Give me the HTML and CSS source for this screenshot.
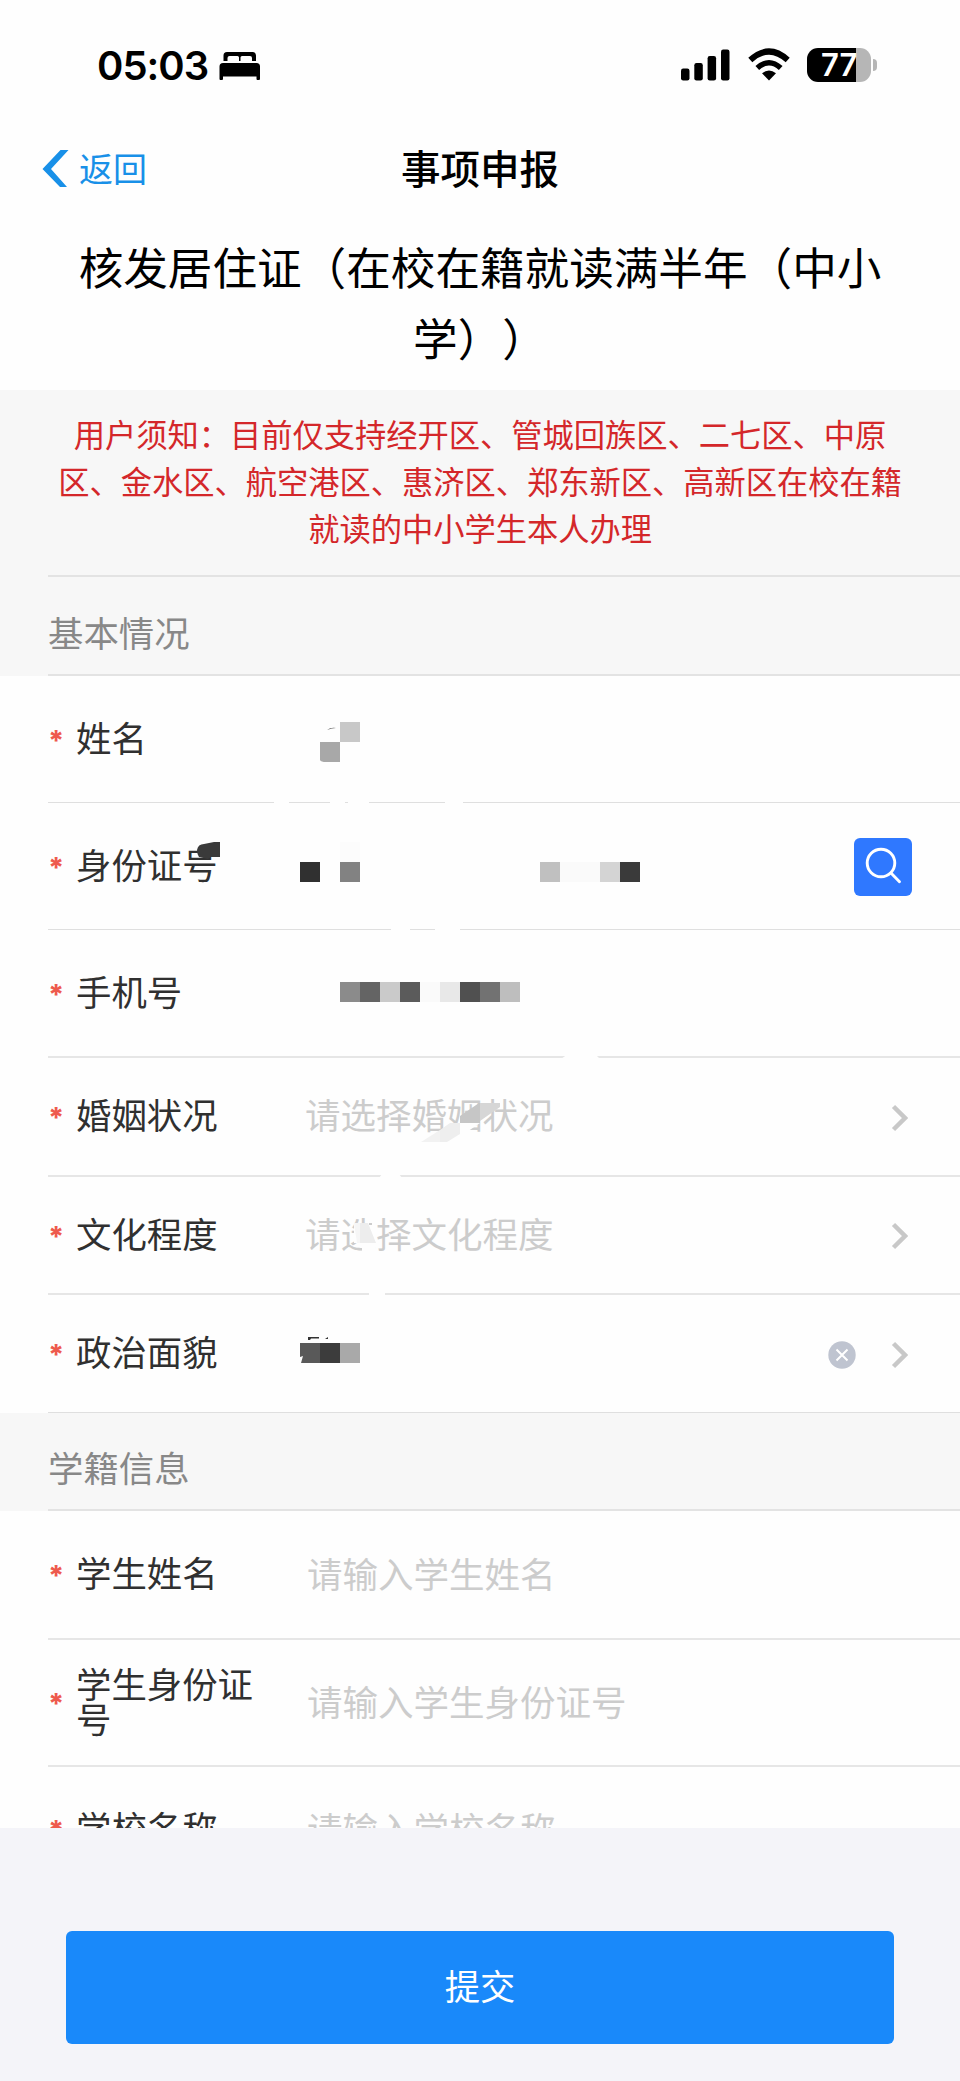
FILE: index.html
```html
<!DOCTYPE html>
<html lang="zh-CN">
<head>
<meta charset="utf-8">
<title>事项申报</title>
<link rel="stylesheet" href="styles.css">
</head>
<body>
<div class="screen">
  <header class="status">
    <div class="status-left">
      <span class="time">05:03</span>
      <svg class="bed" width="42" height="30" viewBox="0 0 42 30"><path d="M4.500 10V4.500Q4.500 1 8 1H33.500Q37 1 37 4.500V10H33V7Q33 5 31 5H23Q21.500 5 21.500 6.500V10H20V6.500Q20 5 18.500 5H10.500Q8.500 5 8.500 7V10Z"/><path d="M.500 28V15.500Q.500 12 4 12H37.500Q41 12 41 15.500V28Q41 29 40 29H38.500Q37.500 29 37.500 28V25.500H4V28Q4 29 3 29H1.500Q.500 29 .500 28Z"/></svg>
    </div>
    <div class="status-right">
      <svg width="49" height="32" viewBox="0 0 49 32"><rect x="0" y="19.500" width="8.500" height="12" rx="2.200"/><rect x="13.300" y="14" width="8.500" height="17.500" rx="2.200"/><rect x="26.600" y="7" width="8.500" height="24.500" rx="2.200"/><rect x="40" y="0.500" width="8.500" height="31" rx="2.200"/></svg>
      <svg class="wifi" width="44" height="33" viewBox="0 0 44 33"><path d="M3.300 12Q22-5 40.700 12" fill="none" stroke="#000" stroke-width="6"/><path d="M10.300 20Q22 9.500 33.700 20" fill="none" stroke="#000" stroke-width="5.500"/><path d="M15 25.300Q22 19.500 29 25.300L22 32.500Z"/></svg>
      <div class="battery"><span class="battery-body">77</span><span class="battery-tip"></span></div>
    </div>
  </header>
  <nav class="nav">
    <a class="back"><svg width="28" height="40" viewBox="0 0 28 40"><path d="M.500 20 18.500 1H26.500L9 20 25 38H18Z" fill="#1890e8"/></svg><span>返回</span></a>
    <h1 class="nav-title">事项申报</h1>
    <span class="nav-side"></span>
  </nav>
  <h2 class="heading">核发居住证（在校在籍就读满半年（中小<br>学））</h2>
  <main class="form">
    <div class="notice"><p>用户须知：目前仅支持经开区、管城回族区、二七区、中原<br>区、金水区、航空港区、惠济区、郑东新区、高新区在校在籍<br>就读的中小学生本人办理</p></div>
    <h3 class="section">基本情况</h3>
    <div class="row thin r-name"><i class="req">*</i><label>姓名</label></div>
    <div class="row thin r-id"><i class="req">*</i><label>身份证号</label><span class="value"></span>
      <button class="search"><svg width="58" height="58" viewBox="0 0 58 58" fill="none" stroke="#fff" stroke-width="2.900" stroke-linecap="round"><circle cx="27" cy="25" r="13.800"/><path d="m37 35 8.500 8.800"/></svg></button></div>
    <div class="row r-phone"><i class="req">*</i><label>手机号</label></div>
    <div class="row r-marriage"><i class="req">*</i><label>婚姻状况</label><span class="value">请选择婚姻状况</span><svg class="arrow" width="17" height="30" viewBox="0 0 17 30"><path d="m2.500 3.500 11.500 11.500-11.500 11.500"/></svg></div>
    <div class="row r-pick"><i class="req">*</i><label>文化程度</label><span class="value">请选择文化程度</span><svg class="arrow" width="17" height="30" viewBox="0 0 17 30"><path d="m2.500 3.500 11.500 11.500-11.500 11.500"/></svg></div>
    <div class="row thin r-pick"><i class="req">*</i><label>政治面貌</label><span class="value"></span><svg class="clear" width="28" height="28" viewBox="0 0 28 28"><circle cx="14" cy="14" r="13.700" fill="#bfc4d0"/><path d="m8.500 8.500 11 11m0-11-11 11" stroke="#fff" stroke-width="2"/></svg><svg class="arrow" width="17" height="30" viewBox="0 0 17 30"><path d="m2.500 3.500 11.500 11.500-11.500 11.500"/></svg></div>
    <h3 class="section second">学籍信息</h3>
    <div class="row input r-student"><i class="req">*</i><label>学生姓名</label><span class="value">请输入学生姓名</span></div>
    <div class="row input r-sid"><i class="req">*</i><label>学生身份证号</label><span class="value">请输入学生身份证号</span></div>
    <div class="row input r-school"><i class="req">*</i><label>学校名称</label><span class="value">请输入学校名称</span></div>
  </main>
  <footer class="footer"><button class="submit">提交</button></footer>
  <svg class="redaction" width="960" height="2081" viewBox="0 0 960 2081">
    <g fill="#fefefe"><path d="M274 800h15v5h-15zM330 800h15v5h-15zM348 800h21v5h-21zM445 800h18v5h-18zM391 927h19v5h-19zM435 927h25v5h-25zM561 1059l7-5h27l5 5zM379 1178l3-4h17l3 4zM369 1292h16v5h-16z"/></g>
    <path d="M327 730q4-3 9-2-4 0-9 2z" fill="#555"/>
    <path d="M340 722h20v20h-20z" fill="#c8c8c8"/><path d="M320 742h20v20h-14q-5 0-6-2z" fill="#a8a8a8"/>
    <path d="M197 850q1-6 7-6l10-2h6v15h-9l-3 2-9-2q-2-3-2-7z" fill="#3a3a3a"/>
    <path d="M300 862h20v20h-20z" fill="#303030"/><path d="M340 862h20v20h-20z" fill="#828282"/><path d="M340 842h20v20h-20z" fill="#fcfcfc"/><path d="M540 862h20v20h-20z" fill="#c0c0c0"/><path d="M560 862h40v20h-40z" fill="#fafafa"/><path d="M600 862h20v20h-20z" fill="#d4d4d4"/><path d="M620 862h20v20h-20z" fill="#3a3a3a"/>
    <path d="M340 982h20v20h-20z" fill="#8b8b8b"/><path d="M360 982h20v20h-20z" fill="#646464"/><path d="M380 982h20v20h-20z" fill="#cacaca"/><path d="M400 982h20v20h-20z" fill="#5b5b5b"/><path d="M420 982h20v20h-20z" fill="#fafafa"/><path d="M440 982h20v20h-20z" fill="#e8e8e8"/><path d="M460 982h20v20h-20z" fill="#505050"/><path d="M480 982h20v20h-20z" fill="#727272"/><path d="M500 982h20v20h-20z" fill="#bebebe"/>
    <path d="M444 1123h36l-19 13z" fill="#fefefe"/><path d="M460 1116l19-13h1v20h-20z" fill="#c6c6c6"/><path d="M480 1103h20v4l-20 14z" fill="#d6d6d6"/><path d="M421 1142l19-12v12z" fill="#f2f2f2"/><path d="M440 1130l10-7h10v11l-13 8h-7z" fill="#eee"/>
    <path d="M354 1223h21v14l1 6h-1v10h-13v-10h-8z" fill="#fefefe"/><path d="M354 1223h6v20h-3z" fill="#f6f6f6"/><path d="M360 1223h8l8 20h-16z" fill="#ededed"/><path d="M369 1223h3v2h-3z" fill="#ccc"/>
    <path d="M300 1343h20v20h-20z" fill="#595959"/><path d="M320 1343h20v20h-20z" fill="#3c3c3c"/><path d="M340 1343h20v20h-20z" fill="#a9a9a9"/><path d="M308 1337h11v1.500h-8l-1 1.500h-2zM325 1339l3-2v2z" fill="#333"/><path d="M300 1357l3-1-2 7h-1z" fill="#fefefe"/>
  </svg>
</div>
</body>
</html>
```
FILE: styles.css
```css
* { box-sizing: border-box; }
body { margin: 0; background: #fefefe; font-family: "Noto Sans CJK SC", sans-serif; text-spacing-trim: space-all; }
h1, h2, h3, p { margin: 0; font-weight: 400; }
button { border: 0; padding: 0; font: inherit; }
svg { display: block; flex: none; }
.screen { position: relative; width: 960px; height: 2081px; display: flex; flex-direction: column; overflow: hidden; }
.status { height: 130px; padding: 0 83px 0 97px; display: flex; justify-content: space-between; align-items: center; font-family: Inter, sans-serif; }
.status-left { display: flex; align-items: center; gap: 10px; }
.time { font-size: 40px; font-weight: 600; line-height: 48px; width: 112px; white-space: nowrap; letter-spacing: -1px; padding-top: 1px; }
.bed { margin-top: 2px; }
.status-right { display: flex; align-items: center; margin-top: -1px; }
.wifi { margin: 0 16px 0 17px; }
.battery { display: flex; align-items: center; gap: 2px; }
.battery-body { width: 64px; height: 34px; border-radius: 11px; background: linear-gradient(90deg, #000 49px, #b6b6b6 49px); color: #fff; font-size: 31px; font-weight: 600; line-height: 34px; padding-left: 14px; white-space: nowrap; }
.battery-tip { width: 4px; height: 12px; border-radius: 0 5px 5px 0; background: #b6b6b6; }
.nav { height: 80px; padding: 0 42px; display: flex; align-items: center; }
.back, .nav-side { flex: 1; }
.back { display: flex; align-items: center; gap: 9px; color: #1890e8; font-size: 34px; line-height: 40px; }
.back span { padding-bottom: 4px; }
.back svg { margin-top: -2px; }
.nav-title { font-size: 39.500px; font-weight: 500; line-height: 48px; color: #000; padding-bottom: 6px; }
.heading { height: 180px; padding-top: 20px; font-size: 44.600px; line-height: 71px; text-align: center; color: #000; white-space: nowrap; }
.form { height: 1438px; overflow: hidden; }
.notice { height: 187px; padding: 20px 0 0; background: #f7f7f7; color: #d4272a; font-size: 31.250px; line-height: 47px; text-align: center; white-space: nowrap; display: flex; flex-direction: column; justify-content: space-between; }
.notice::after { content: ""; height: 2px; margin-left: 48px; background: #e3e3e3; }
.section { height: 99px; padding: 11px 0 0 48px; background: #f7f7f7; color: #888; font-size: 35.400px; line-height: 86px; display: flex; flex-direction: column; justify-content: space-between; }
.section { padding-top: 12px; line-height: 85px; }
.section::after { content: ""; height: 2px; background: #e3e3e3; flex: none; }
.section.second { height: 98px; line-height: 84px; }
.row { margin-left: 48px; padding-right: 48px; display: flex; align-items: center; border-bottom: 2px solid #e6e6e6; font-size: 35.400px; line-height: 35px; color: #303030; }
.row.thin { border-bottom: 1px solid #dfdfdf; }
.r-name, .r-id, .r-sid { height: 127px; }
.r-phone { height: 128px; }
.r-marriage { height: 119px; }
.r-pick { height: 118px; }
.r-student { height: 129px; }
.r-school { height: 127px; }
.req { width: 28px; color: #ee5a4d; font: 800 28px/26px Inter, sans-serif; padding-top: 3px; flex: none; }
.row label { width: 179px; margin-right: 50px; padding-bottom: 6px; flex: none; }
.value { flex: 1; color: #ccc; font-size: 35.500px; white-space: nowrap; padding-bottom: 6px; }
.input .value { padding: 0 0 5px 2px; }
.input label { padding-bottom: 6px; }
.arrow { fill: none; stroke: #c8c8c8; stroke-width: 4.500; margin-right: 4px; margin-top: 2px; }
.clear { margin: 2px 35px 0 0; }
.search { width: 58px; height: 58px; border-radius: 6px; background: #2f78ff; margin-top: 2px; }
.footer { flex: 1; padding: 103px 66px 0; background: #f4f4f9; }
.submit { display: block; width: 828px; height: 113px; border-radius: 6px; background: #1989fa; color: #fff; font-size: 35.300px; padding-bottom: 6px; }
.redaction { position: absolute; left: 0; top: 0; pointer-events: none; }
```
